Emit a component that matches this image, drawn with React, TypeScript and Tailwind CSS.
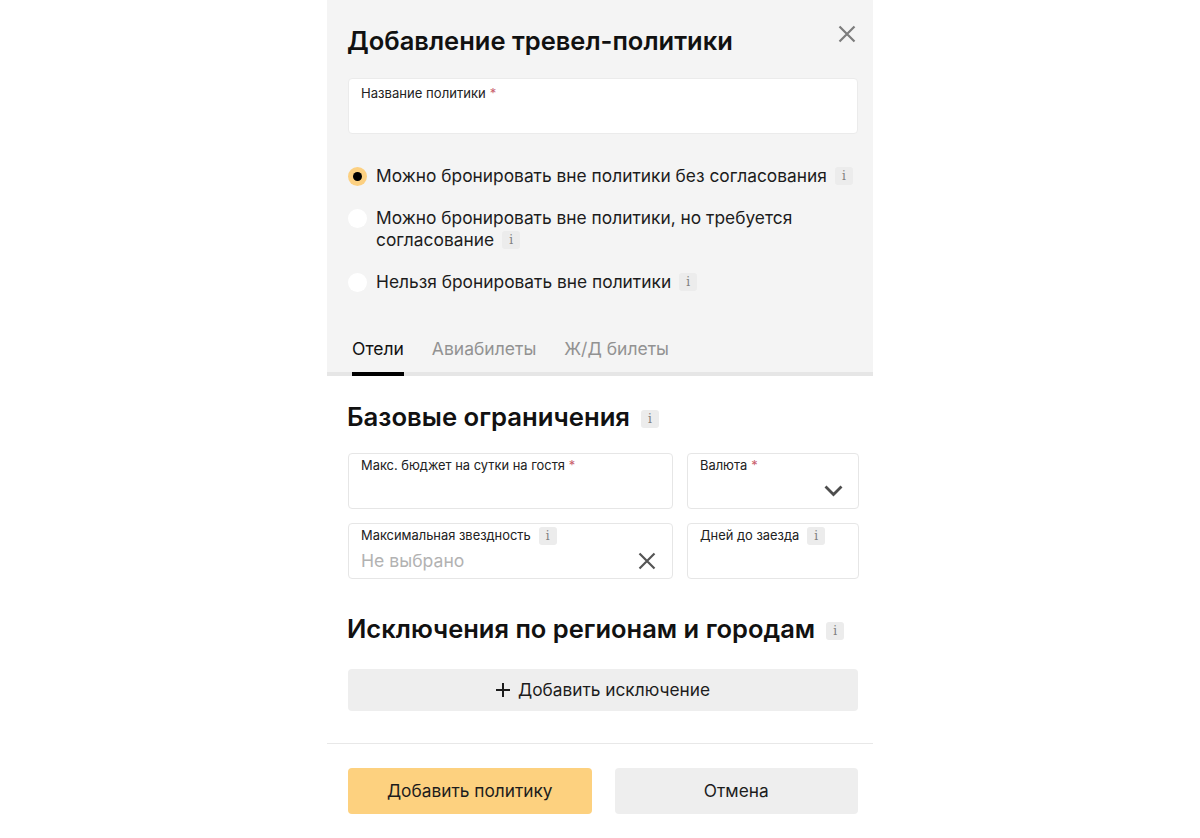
import React from "react";

const Info = ({ className = "" }: { className?: string }) => (
  <span className={"inline-flex h-[18px] w-[18px] shrink-0 items-center justify-center rounded-[3px] bg-[#ececec] text-[12px] leading-none text-[#808080] [font-family:'DejaVu_Serif',serif] " + className}>i</span>
);

const Cross = ({ size, color }: { size: number; color: string }) => (
  <svg width={size} height={size} viewBox="0 0 18 18" fill="none" stroke={color} strokeWidth="2.2">
    <path d="M1.5 1.5 16.5 16.5M16.5 1.5 1.5 16.5" />
  </svg>
);

const Star = () => <span className="ml-1 text-[#c9606c]">*</span>;

const Field = ({ children, className = "" }: { children: React.ReactNode; className?: string }) => (
  <div className={"h-14 rounded-[4px] border border-[#e6e6e6] bg-white pl-[12px] pr-3 pt-[3px] " + className}>{children}</div>
);

const Radio = ({ active }: { active?: boolean }) =>
  active ? (
    <span className="mt-[2px] flex h-[19px] w-[19px] shrink-0 items-center justify-center rounded-full bg-[#fcd081]">
      <span className="h-[9px] w-[9px] rounded-full bg-black" />
    </span>
  ) : (
    <span className="mt-[2px] h-[19px] w-[19px] shrink-0 rounded-full bg-white" />
  );

export default function App() {
  return (
    <div className="h-[838px] w-full overflow-hidden bg-white [font-family:Inter,'Liberation_Sans',sans-serif]">
      <div className="ml-[327px] w-[546px]">
        <div className="relative h-[372px] bg-[#f4f4f4] pl-[21px] pr-[15px] pt-[23px]">
          <button className="absolute right-[17px] top-[25px]"><Cross size={18} color="#7d7d7d" /></button>
          <h1 className="-ml-px text-[25.5px] font-semibold leading-[36px] text-[#111]">Добавление тревел-политики</h1>
          <div className="mt-[19px] h-14 rounded-[4px] border border-[#ebebeb] bg-white pl-[12px] pt-[5px] text-[13.1px] leading-[18px] text-[#222]">
            Название политики<Star />
          </div>
          <div className="mt-[31px] flex flex-col text-[17.35px] leading-[22px] text-[#1c1c1c]">
            <div className="flex gap-[9px]">
              <Radio active />
              <div className="flex items-center gap-[8px]">Можно бронировать вне политики без согласования<Info /></div>
            </div>
            <div className="mt-[20px] flex gap-[9px]">
              <Radio />
              <div>
                Можно бронировать вне политики, но требуется
                <div className="flex items-center gap-[8px]">согласование<Info /></div>
              </div>
            </div>
            <div className="mt-[20px] flex gap-[9px]">
              <Radio />
              <div className="flex items-center gap-[8px]">Нельзя бронировать вне политики<Info /></div>
            </div>
          </div>
          <div className="mt-[45px] flex gap-[28px] pl-[4px] text-[17.5px] leading-[22px] text-[#929292]">
            <div className="relative text-[#111]">Отели<span className="absolute -bottom-[16px] left-0 right-0 h-[4px] bg-black" /></div>
            <div>Авиабилеты</div>
            <div>Ж/Д билеты</div>
          </div>
        </div>
        <div className="h-[4px] bg-[#e6e6e6]" />
        <div className="pl-[21px] pr-[15px]">
          <div className="mt-[23px] flex items-center gap-[11px]">
            <h2 className="-ml-px text-[25.7px] font-semibold leading-[36px] text-[#111]">Базовые ограничения</h2>
            <Info className="mt-[3px]" />
          </div>
          <div className="mt-[18px] grid grid-cols-[325px_172px] gap-x-[14px] gap-y-[14px] text-[12.9px] leading-[18px] text-[#222]">
            <Field>Макс. бюджет на сутки на гостя<Star /></Field>
            <Field className="relative">
              Валюта<Star />
              <svg className="absolute bottom-[11px] right-[15px]" width="19" height="12" viewBox="0 0 19 12" fill="none" stroke="#4d4d4d" strokeWidth="2.8"><path d="M1.5 1.5 9.5 9.5 17.5 1.5" /></svg>
            </Field>
            <Field className="relative">
              <div className="flex items-center gap-[8px]">Максимальная звездность<Info className="h-[17px] w-[17px]" /></div>
              <div className="mt-[5px] text-[17.6px] leading-[22px] text-[#b2b2b2]">Не выбрано</div>
              <span className="absolute bottom-[8px] right-[16px]"><Cross size={18} color="#555" /></span>
            </Field>
            <Field>
              <div className="flex items-center gap-[8px]">Дней до заезда<Info className="h-[17px] w-[17px]" /></div>
            </Field>
          </div>
          <div className="mt-[32px] flex items-center gap-[11px]">
            <h2 className="-ml-px text-[25.5px] font-semibold leading-[36px] text-[#111]">Исключения по регионам и городам</h2>
            <Info className="mt-[3px]" />
          </div>
          <button className="mt-[22px] flex h-[42px] w-full items-center justify-center gap-[8px] rounded-[4px] bg-[#eeeeee] text-[17.3px] text-[#1c1c1c]">
            <svg width="14" height="14" viewBox="0 0 14 14" stroke="#1c1c1c" strokeWidth="2"><path d="M7 0V14M0 7H14" /></svg>
            Добавить исключение
          </button>
        </div>
        <div className="mt-[32px] h-px bg-[#e8e8e8]" />
        <div className="mt-[24px] flex gap-[23px] pl-[21px] pr-[15px] text-[17.3px] text-[#1c1c1c]">
          <button className="h-[46px] w-[244px] rounded-[4px] bg-[#fdd17f]">Добавить политику</button>
          <button className="h-[46px] w-[244px] rounded-[4px] bg-[#eeeeee]">Отмена</button>
        </div>
      </div>
    </div>
  );
}
